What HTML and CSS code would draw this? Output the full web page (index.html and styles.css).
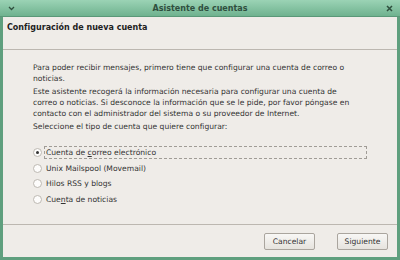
FILE: index.html
```html
<!DOCTYPE html>
<html lang="es">
<head>
    <meta charset="UTF-8">
    <title>Asistente de cuentas</title>
    <link rel="stylesheet" href="styles.css">
</head>
<body>
    <div class="window">
        <div class="titlebar">
            <span class="menu-btn">
                <svg width="7" height="5" viewBox="0 0 7 5"><path d="M1 1 L3.5 3.5 L6 1" fill="none" stroke="#2f4f3e" stroke-width="1.3"/></svg>
            </span>
            <span class="title">Asistente de cuentas</span>
            <span class="close-btn">
                <svg width="7" height="7" viewBox="0 0 7 7"><path d="M1 1 L6 6 M6 1 L1 6" fill="none" stroke="#2f4f3e" stroke-width="1.5"/></svg>
            </span>
        </div>

        <div class="header">
            <h1>Configuración de nueva cuenta</h1>
        </div>

        <div class="content">
            <p>Para poder recibir mensajes, primero tiene que configurar una cuenta de correo o noticias.</p>
            <p>Este asistente recogerá la información necesaria para configurar una cuenta de correo o noticias. Si desconoce la información que se le pide, por favor póngase en contacto con el administrador del sistema o su proveedor de Internet.</p>
            <p>Seleccione el tipo de cuenta que quiere configurar:</p>

            <div class="options">
                <div class="option">
                    <span class="radio checked"></span>
                    <span class="label focused">Cuenta de <u>c</u>orreo electrónico</span>
                </div>
                <div class="option">
                    <span class="radio"></span>
                    <span class="label">Unix Mailspool (Movemail)</span>
                </div>
                <div class="option">
                    <span class="radio"></span>
                    <span class="label">Hilos RSS y blogs</span>
                </div>
                <div class="option">
                    <span class="radio"></span>
                    <span class="label">Cue<u>n</u>ta de noticias</span>
                </div>
            </div>
        </div>

        <div class="actions">
            <button class="btn">Cancelar</button>
            <button class="btn">Siguiente</button>
        </div>
    </div>
</body>
</html>
```

FILE: styles.css
```css
body {
    margin: 0;
    font-family: "DejaVu Sans", sans-serif;
    font-size: 7.6px;
    color: #333;
}

.window {
    width: 400px;
    height: 260px;
    box-sizing: border-box;
    display: flex;
    flex-direction: column;
    background: #efece8;
    border: 3px solid #5f9f7e;
    border-top: none;
}

.titlebar {
    flex-shrink: 0;
    height: 16px;
    margin: 0 -3px;
    padding: 0 6px;
    display: flex;
    align-items: center;
    background: linear-gradient(to bottom, #9bd3b5, #6fb28f);
    border-bottom: 1px solid #5a9878;
}

.title {
    flex: 1;
    text-align: center;
    font-weight: bold;
    font-size: 8px;
    color: #2f4f3e;
}

.menu-btn, .close-btn {
    width: 10px;
    display: flex;
    justify-content: center;
}

.header {
    flex-shrink: 0;
    height: 26px;
    padding: 6px 0 0 4px;
    border-bottom: 1px solid #bcb7b0;
}

.header h1 {
    margin: 0;
    font-size: 8px;
    font-weight: bold;
    color: #1e1e1e;
}

.content {
    flex: 1;
    padding: 12px 28px 0 30px;
}

.content p {
    max-width: 326px;
    margin: 0 0 2px 0;
    line-height: 11px;
}

.options {
    margin-top: 13px;
}

.option {
    height: 15.5px;
    display: flex;
    align-items: center;
}

.radio {
    flex-shrink: 0;
    width: 7px;
    height: 7px;
    margin: 0 2px 0 0;
    border: 1px solid #bdb9b2;
    border-radius: 50%;
    background: #fdfcfb;
    position: relative;
}

.radio.checked::after {
    content: "";
    position: absolute;
    left: 2px;
    top: 2px;
    width: 3px;
    height: 3px;
    border-radius: 50%;
    background: #333;
}

.label {
    padding: 1px 1px;
    border: 1px solid transparent;
}

.label.focused {
    width: 319px;
    border: 1px dashed #a09c96;
}

.actions {
    flex-shrink: 0;
    height: 32px;
    padding: 0 9px 0 0;
    display: flex;
    justify-content: flex-end;
    align-items: center;
    gap: 22px;
    border-top: 1px solid #bcb7b0;
}

.btn {
    width: 51px;
    height: 17px;
    padding: 0;
    font-family: "DejaVu Sans", sans-serif;
    font-size: 7.6px;
    color: #333;
    background: linear-gradient(to bottom, #f8f7f5, #e6e3de);
    border: 1px solid #aaa59e;
    border-radius: 2px;
}
```
